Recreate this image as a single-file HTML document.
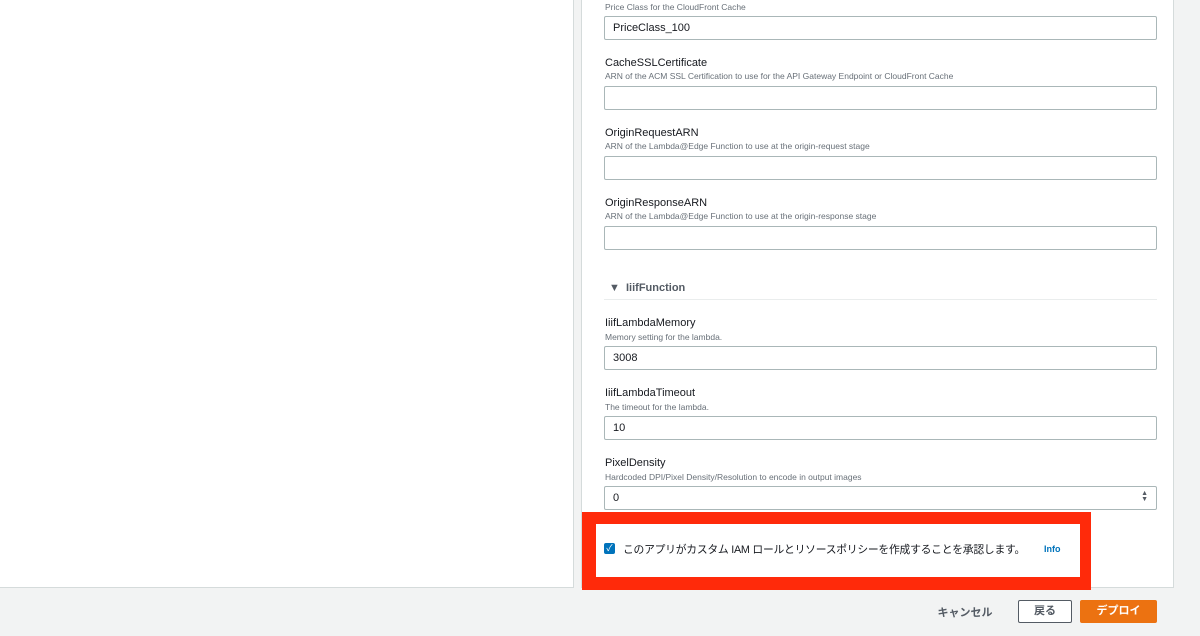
<!DOCTYPE html>
<html><head><meta charset="utf-8"><style>
*{box-sizing:border-box;margin:0;padding:0}
body{width:1200px;height:636px;background:#f2f3f3;position:relative;overflow:hidden;font-family:"Liberation Sans","Noto Sans CJK JP",sans-serif;color:#16191f}
.left{position:absolute;left:0;top:0;width:574px;height:588px;background:#fff;border-right:1px solid #d5dbdb;border-bottom:1px solid #d5dbdb}
.right{position:absolute;left:581px;top:-2px;width:593px;height:590px;background:#fff;border:1px solid #d5dbdb}
.a{position:absolute;left:605px;font-size:11px;color:#16191f}
.d{position:absolute;left:605px;font-size:8.5px;color:#687078}
.i{position:absolute;left:604px;width:553px;height:24px;border:1px solid #aab7b8;border-radius:2px;background:#fff;font-size:11px;padding:5px 8px;color:#16191f}
.red{position:absolute;left:582px;top:512px;width:509px;height:78px;background:#ff2a0a}
.inner{position:absolute;left:596px;top:524px;width:484px;height:53px;background:#fff}
.btn{position:absolute;font-size:11px;font-weight:bold;text-align:center}
</style></head><body>
<div class="left"></div>
<div class="right"></div>
<div class="d" style="top:2px">Price Class for the CloudFront Cache</div>
<div class="i" style="top:16px">PriceClass_100</div>
<div class="a" style="top:57px">CacheSSLCertificate</div>
<div class="d" style="top:71px">ARN of the ACM SSL Certification to use for the API Gateway Endpoint or CloudFront Cache</div>
<div class="i" style="top:86px"></div>
<div class="a" style="top:127px">OriginRequestARN</div>
<div class="d" style="top:141px">ARN of the Lambda@Edge Function to use at the origin-request stage</div>
<div class="i" style="top:156px"></div>
<div class="a" style="top:197px">OriginResponseARN</div>
<div class="d" style="top:211px">ARN of the Lambda@Edge Function to use at the origin-response stage</div>
<div class="i" style="top:226px"></div>
<div style="position:absolute;left:609px;top:282px;font-size:11px;font-weight:bold;color:#545b64">▼&nbsp; IiifFunction</div>
<div style="position:absolute;left:604px;top:299px;width:553px;height:1px;background:#eaeded"></div>
<div class="a" style="top:317px">IiifLambdaMemory</div>
<div class="d" style="top:332px">Memory setting for the lambda.</div>
<div class="i" style="top:346px">3008</div>
<div class="a" style="top:387px">IiifLambdaTimeout</div>
<div class="d" style="top:402px">The timeout for the lambda.</div>
<div class="i" style="top:416px">10</div>
<div class="a" style="top:457px">PixelDensity</div>
<div class="d" style="top:472px">Hardcoded DPI/Pixel Density/Resolution to encode in output images</div>
<div class="i" style="top:486px">0<span style="position:absolute;right:8px;top:4px;font-size:7px;line-height:6px;color:#545b64">▲<br>▼</span></div>
<div class="red"></div>
<div class="inner"></div>
<div style="position:absolute;left:604px;top:543px;width:11px;height:11px;background:#0073bb;border-radius:2px;color:#fff;font-size:9px;line-height:11px;text-align:center">✓</div>
<div style="position:absolute;left:623px;top:541px;font-size:10.8px;letter-spacing:-0.25px;color:#16191f">このアプリがカスタム IAM ロールとリソースポリシーを作成することを承認します。</div>
<div style="position:absolute;left:1044px;top:544px;font-size:9px;font-weight:bold;color:#0073bb">Info</div>
<div class="btn" style="left:930px;top:604px;width:70px;color:#545b64">キャンセル</div>
<div class="btn" style="left:1018px;top:600px;width:54px;height:23px;border:1px solid #545b64;border-radius:2px;background:#fff;line-height:21px;color:#545b64">戻る</div>
<div class="btn" style="left:1080px;top:600px;width:77px;height:23px;background:#ec7211;border-radius:2px;line-height:23px;color:#fff">デプロイ</div>
</body></html>
